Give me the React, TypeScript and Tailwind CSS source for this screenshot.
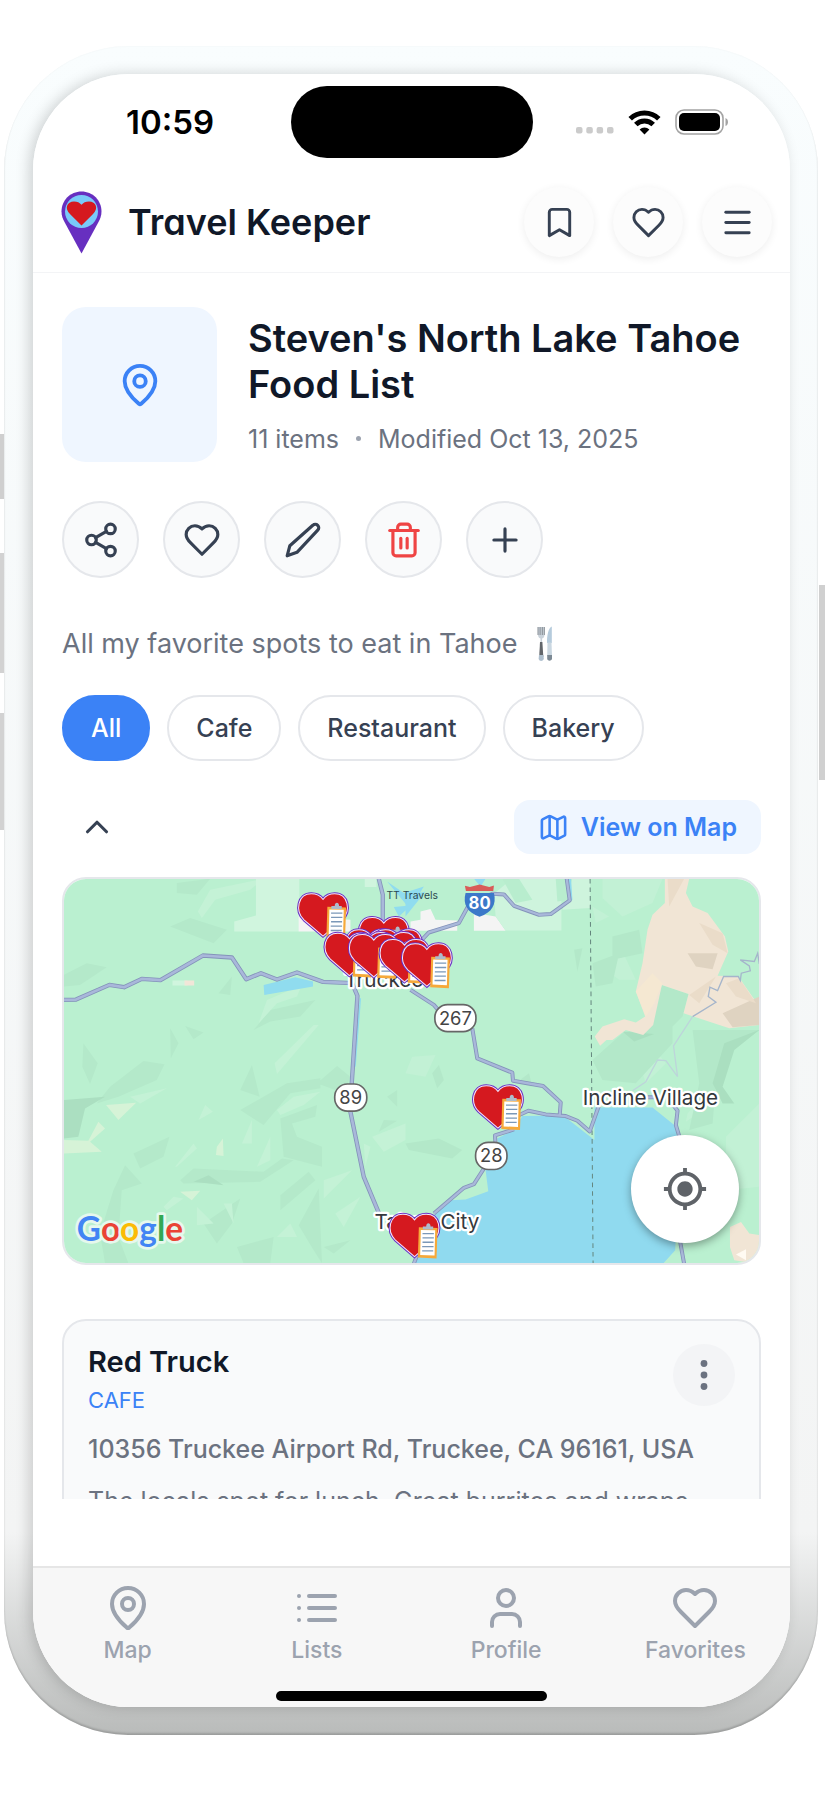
import { useState, type ReactNode } from "react";
import { ChevronUp, Map as MapIcon, MapPin, Plus, Share2, Trash2, Bookmark, Menu, User } from "lucide-react";
import { MdMyLocation } from "react-icons/md";

const CATEGORIES = ["All", "Cafe", "Restaurant", "Bakery"];

// Top-left corner of every saved place, back to front
const MARKERS: [number, number][] = [
  [741, 68],
  [923, 139],
  [883, 176],
  [963, 176],
  [948, 184],
  [820, 186],
  [893, 190],
  [985, 205],
  [1052, 218],
  [1265, 643],
  [1015, 1028],
];

function Stroke({ size, children }: { size: number; children: ReactNode }) {
  return (
    <svg
      width={size}
      height={size}
      viewBox="0 0 24 24"
      fill="none"
      stroke="currentColor"
      strokeWidth={2}
      strokeLinecap="round"
      strokeLinejoin="round"
      aria-hidden="true"
    >
      {children}
    </svg>
  );
}

function HeartIcon({ size }: { size: number }) {
  return (
    <Stroke size={size}>
      <path d="M19 14c1.49-1.46 3-3.21 3-5.5A5.5 5.5 0 0 0 16.5 3c-1.76 0-3 .5-4.5 2-1.5-1.5-2.74-2-4.5-2A5.5 5.5 0 0 0 2 8.5c0 2.3 1.5 4.05 3 5.5l7 7Z" />
    </Stroke>
  );
}

function PencilIcon({ size }: { size: number }) {
  return (
    <Stroke size={size}>
      <path d="M18.2 2.7a2 2 0 0 1 3.1 3.1L8.200 19.800 2 22l1.700-6.400Z" />
    </Stroke>
  );
}

function ListIcon({ size }: { size: number }) {
  return (
    <Stroke size={size}>
      <path d="M8 6h13M8 12h13M8 18h13M3 6h.01M3 12h.01M3 18h.01" />
    </Stroke>
  );
}

function StatusBar() {
  return (
    <div className="grid grid-cols-[1fr_auto_1fr] items-center pt-3">
      <div className="pl-[93px] text-[33px] leading-10 font-semibold text-black">10:59</div>
      <div className="h-[72px] w-[242px] rounded-full bg-black" />
      <div className="flex items-center justify-end gap-3.5 pr-[61px]">
        <svg width="38" height="26" viewBox="0 0 38 26" fill="#cbcbcb" aria-hidden="true">
          <rect x="0" y="18" width="6.500" height="6.500" rx="2" />
          <rect x="10.300" y="18" width="6.500" height="6.500" rx="2" />
          <rect x="20.600" y="18" width="6.500" height="6.500" rx="2" />
          <rect x="31" y="18" width="6.500" height="6.500" rx="2" />
        </svg>
        <svg width="33" height="25" viewBox="0 0 33 25" aria-hidden="true">
          <g fill="none" stroke="#000" strokeWidth="5">
            <path d="M2.2 8.8a20.5 20.5 0 0 1 28.6 0" />
            <path d="M7.8 14.5a12.4 12.4 0 0 1 17.4 0" />
          </g>
          <path d="M11.6 19.4a7.2 7.2 0 0 1 9.8 0L16.5 24.6Z" />
        </svg>
        <svg width="54" height="26" viewBox="0 0 54 26" aria-hidden="true">
          <rect x="1" y="1" width="47" height="24" rx="8" fill="none" stroke="#a3a3a3" strokeWidth="1.6" />
          <rect x="4" y="4" width="41" height="18" rx="5" />
          <path d="M50.5 9c3.300 1.200 3.300 7 0 8Z" fill="#a3a3a3" />
        </svg>
      </div>
    </div>
  );
}

function AppHeader() {
  const round =
    "flex size-[70px] items-center justify-center rounded-full bg-[#fcfcfc] text-gray-700 shadow-[0_2px_8px_rgba(0,0,0,0.07)]";

  return (
    <header className="flex items-center border-b border-gray-100 pt-[29px] pr-[18px] pb-[15px] pl-7">
      <svg width="41" height="63" viewBox="0 0 41 63" aria-hidden="true">
        <path d="M20.500 0.500C9.300 0.500 0.500 9.300 0.500 20.500c0 4.500 1.400 7.500 3 10.500L20.500 62.500 37.500 31c1.600-3 3-6 3-10.500C40.500 9.300 31.700 0.500 20.500 0.500Z" fill="#672fc0" />
        <circle cx="20.500" cy="20.500" r="16.500" fill="#79caf8" />
        <path d="M20.500 34.500 9.200 23.200C3 17.500 6 10.500 13 10.500c3.300 0 5.700 1.200 7.500 3.300 1.800-2.100 4.200-3.300 7.500-3.300 7 0 10 7 3.800 12.700Z" fill="#d5191f" />
      </svg>
      <h1 className="ml-[26px] flex-1 text-[36px] leading-10 font-semibold text-gray-900 [font-feature-settings:'cv11']">
        Travel Keeper
      </h1>
      <div className="flex gap-[19px]">
        <button className={round} aria-label="Saved">
          <Bookmark size={35} />
        </button>
        <button className={round} aria-label="Favorites">
          <HeartIcon size={35} />
        </button>
        <button className={round} aria-label="Menu">
          <Menu size={35} />
        </button>
      </div>
    </header>
  );
}

function ListSummary() {
  const round =
    "flex size-[77px] items-center justify-center rounded-full border-2 border-gray-200 bg-gray-50";

  return (
    <section>
      <div className="flex items-center gap-[31px]">
        <div className="flex size-[155px] shrink-0 items-center justify-center rounded-3xl bg-blue-50 text-[#3b82f6]">
          <MapPin size={46} />
        </div>
        <div>
          <h2 className="text-[38px] leading-[46px] font-semibold text-gray-900">
            Steven's North Lake Tahoe Food List
          </h2>
          <p className="mt-4 flex items-center text-[25px] leading-8 text-[#6b7280]">
            11 items
            <span className="mx-[17px] size-[5px] rounded-full bg-[#9ca3af]" />
            Modified Oct 13, 2025
          </p>
        </div>
      </div>

      <div className="mt-[39px] flex gap-6 text-gray-700">
        <button className={round} aria-label="Share list">
          <Share2 size={38} />
        </button>
        <button className={round} aria-label="Favorite list">
          <HeartIcon size={38} />
        </button>
        <button className={round} aria-label="Edit list">
          <PencilIcon size={38} />
        </button>
        <button className={`${round} text-[#ef4444]`} aria-label="Delete list">
          <Trash2 size={38} />
        </button>
        <button className={round} aria-label="Add item">
          <Plus size={38} />
        </button>
      </div>

      <p className="mt-[46px] flex items-center gap-5 text-[27px] leading-10 text-[#6b7280]">
        All my favorite spots to eat in Tahoe
        <svg width="16" height="36" viewBox="0 0 16 36" role="img" aria-label="fork and knife">
          <path d="M1 1v7c0 3 1 4 2.500 4.500V17h1.600v-4.500C6.700 12 7.500 11 7.500 8V1" fill="#c9d2da" />
          <path d="M1 1v8M3.100 1v8M5.300 1v8M7.300 1v8" stroke="#868c93" strokeWidth="1" />
          <path d="M3 16h2.400l.9 15H2.200Z" fill="#62666b" />
          <path d="M2 29h4.500l.3 4c-1 2.500-4.300 2.500-5.200 0Z" fill="#aebfce" />
          <path d="M14.800.500C11.500 2 9.800 9 10 17h4.800Z" fill="#b5cbdc" />
          <path d="M10.500 16.500h4L15 30h-4.800Z" fill="#cad7e1" />
          <path d="M10.200 29H15v4c-1 2.300-4 2.300-4.800 0Z" fill="#7c8994" />
        </svg>
      </p>
    </section>
  );
}

function Shield({ x, y, w, label }: { x: number; y: number; w: number; label: string }) {
  return (
    <g>
      <rect x={x} y={y} width={w} height="81" rx="38" fill="#fff" stroke="#666" strokeWidth="5" />
      <text x={x + w / 2} y={y + 60} textAnchor="middle" fontSize="55" fill="#444">
        {label}
      </text>
    </g>
  );
}

function HeartMarker({ x, y }: { x: number; y: number }) {
  const heart =
    "M77 131 20 82C-8 54 2 4 42 4c15 0 27 6 35 17C85 10 97 4 112 4c40 0 50 50 22 78Z";
  return (
    <g transform={`translate(${x} ${y})`}>
      <path d={heart} fill="#d5191f" stroke="#6a2fc4" strokeWidth="9" />
      <path d={heart} fill="#d5191f" stroke="#f3e9fb" strokeWidth="3" />
      <path d="m90 43 56 2-3 92-56-3Z" fill="#f6a93a" />
      <path d="m96 51 43 1-2 76-43-2Z" fill="#fff" />
      <path d="M102 50v-9h10c0-13 13-13 13 0h8v9Z" fill="#aebccb" />
      <path d="M101 62h34M101 75h34M101 88h33M100 101h34M100 114h33" stroke="#7b98b8" strokeWidth="4" />
    </g>
  );
}

const WEST_ROADS =
  "M42 390 78 389 178 345 222 352 275 327 331 331 458 257 545 263 588 328 632 310 680 329 740 308 818 336 905 340 921 378 904 640 900 725 940 920 990 1040M985 27 997 75 997 200";
const EAST_ROADS =
  "M40 220 70 188 160 160 190 105 260 72 295 74 325 108 400 135 435 133 492 92 483 27M15 360 85 405 115 440M200 475 215 565 320 608 322 632 412 648 465 697 462 735M270 825 268 796 325 778M330 740 368 722 420 733 480 738 515 752 552 784 580 705M235 895 205 942 175 953 85 1030M25 1180 48 1120M725 682 745 682M795 695 815 722 810 765 822 805M822 1110 835 1182";

function MapDrawing() {
  return (
    <svg
      viewBox="42 27 2082 1152"
      preserveAspectRatio="xMidYMid slice"
      className="block size-full [font-family:Inter,sans-serif]"
      role="img"
      aria-label="Map of saved places around North Lake Tahoe"
    >
      <rect x="0" y="0" width="2200" height="1200" fill="#baf0d0" />

      {/* terrain relief, western side */}
      <g fill="#b4e9ca">
        <path d="M380 40 480 27 440 75 380 70ZM360 170 420 145 530 180 490 220ZM42 315 110 280 170 292 90 345 42 350ZM100 520 143 580 120 642 97 590ZM360 475 385 520 362 565ZM405 468 460 488 430 508ZM180 650 280 573 343 583 320 630 205 680 140 700ZM605 585 628 680 570 660ZM570 720 710 640 810 625 810 655 720 670 640 765ZM800 640 860 588 900 620 880 670ZM610 480 660 420 795 390 750 440 660 455ZM505 370 545 320 540 375ZM690 745 800 705 795 740 725 760 740 800 815 830 815 890 700 860ZM250 850 358 800 340 860 270 895ZM390 930 430 895 640 905 695 865 730 870 630 935 400 940ZM190 960 225 885 275 940 215 960 205 1100 235 1179 165 1179 150 1090ZM690 975 775 905 795 930 690 1020ZM460 1060 570 985 545 1060 500 1120ZM560 1130 670 1100 660 1179 580 1179ZM745 1065 805 955 815 1179 790 1140ZM820 1130 900 1110 850 1150ZM985 785 1000 750 1040 752ZM1010 680 1040 660 1040 710Z" />
        <path d="M42 690 165 680 105 715 85 800 42 805Z" fill="#abdfc1" />
        <path d="M430 935 475 915 520 945Z" fill="#abdfc1" />
      </g>
      <g fill="#c4f2d6">
        <path d="M443 125 480 60 640 27 600 60 495 90 455 145ZM625 460 650 390 720 360 760 330 740 380 680 400ZM673 580 790 465 805 465 680 612ZM240 680 350 655 270 700ZM680 720 730 680 810 665 760 705 690 735ZM375 890 430 820 440 835 380 890ZM575 820 605 750 605 820ZM620 890 660 800 660 870ZM445 750 465 705 488 725ZM340 1010 370 980 400 985 350 1020ZM820 930 905 900 820 985ZM855 1030 930 980 880 1070ZM680 1100 720 1060 740 1100ZM440 1010 490 1060 440 1065ZM520 1000 545 1000 550 1060ZM965 800 1065 760 1065 810 1000 845ZM940 820 960 830 945 890Z" />
        <path d="M168 705 258 698 205 750ZM42 810 115 812 145 755 165 775 120 815 155 845 42 850ZM390 965 450 962 425 990ZM500 830 518 805 520 858 497 855Z" fill="#d6f3d7" />
        <path d="M617 27h130v158H552v-30l65-18ZM367 332h45v15h-45ZM943 27h35v25h-35Z" fill="#d0f5de" />
      </g>
      <path d="M745 135 800 145 900 150 900 185H745Z" fill="#f4f4f4" />
      <path d="M403 332h29v15h-29Z" fill="#f1e6d8" />
      <path d="M640 345 735 322 788 335 788 350 642 375ZM1010 35 1060 70 1120 50 1090 100 1045 140 1030 112 1070 108ZM928 385 932 385 916 590 909 590Z" fill="#90dcef" />

      <g transform="translate(1065 0)">
        <path d="M15 155 45 150 45 125 75 118 90 150 155 152 155 183 15 183ZM205 130 270 140 300 183 205 183Z" fill="#f4f4f4" />
        <path d="M265 72 320 27 400 27 467 27 467 182H300L270 140ZM500 27 553 27 553 115 470 120Z" fill="#cef4dd" />
        <path d="M450 27 480 27 490 90 455 95ZM290 27 340 27 380 90 330 100Z" fill="#b8edce" />
        <path d="M590 27 770 27 740 100 650 140 590 85ZM600 300 650 245 690 330 640 330ZM20 560 90 555 60 620 0 610ZM560 110 610 140 570 160ZM730 520 780 580 720 640 700 580ZM845 730 900 670 890 720 840 755ZM960 800 1060 700 1060 950 960 960Z" fill="#c2f1d5" />
        <path d="M620 200 700 180 710 250 620 270ZM560 280 640 250 620 340 570 350ZM650 490 800 440 800 520 690 640 590 630 560 570ZM505 240 530 235 515 305ZM80 610 100 585 115 630 95 655ZM330 640 370 610 380 650ZM0 820 100 805 170 840 140 865 10 840ZM860 480 1060 480 980 540 930 640 920 760 850 780 880 640ZM768 345 848 372 830 440 770 500 735 470Z" fill="#b3e8c9" />
        <path d="M1060 480 985 540 950 650 985 700 950 700 920 640 955 520ZM650 485 745 492 685 515Z" fill="#aadfc0" />
        <path d="M777 27 850 27 840 70 860 110 905 130 957 200 967 245 935 318 997 320 1060 410 1060 465 970 475 833 430 848 372 768 345 742 465 712 495 660 480 620 510 602 510 583 527 567 500 590 470 655 448 690 458 718 440 690 365 710 280 725 180 740 135 777 100Z" fill="#f1e5d5" />
        <path d="M845 250 935 250 920 298 870 290ZM950 430 1060 380 1060 465 980 472Z" fill="#dfd3c1" />
        <path d="M785 27 835 27 790 110ZM880 160 950 190 965 250 920 225ZM850 375 930 320 880 400ZM960 340 1000 325 1050 400 990 380Z" fill="#eadcc9" />
        <path d="M690 365 740 310 770 340 745 400 720 440Z" fill="#f5e8d2" />
        <path d="M972 1070 1005 1055 1030 1090 1062 1095 1062 1182 985 1170 972 1130Z" fill="#f1e5d5" />
        <path d="M990 1153 1020 1137 1020 1170Z" fill="#fffaf2" />

        {/* Lake Tahoe */}
        <path d="M280 830 275 805 325 780 350 738 420 737 480 742 566 810 566 712 740 712 805 765 822 830 808 1140 770 1182 30 1182 40 1110 85 1035 135 990 180 988 248 963 240 900Z" fill="#90daef" />
        <path d="M205 27 240 27 225 50ZM488 27 496 27 500 90 492 95Z" fill="#90daef" />
        <path d="M0 80 60 65 0 140Z" fill="#90dcef" />

        <path d="M860 440 930 397 907 380 912 352 935 362 953 320 997 320 1003 332 1006 310 1033 303 1030 288 1003 270 1045 275 1055 250 1060 282" fill="none" stroke="#a5b5cb" strokeWidth="4" />
        <path d="M860 440 803 528 815 620 780 572 755 570 720 635 680 662" fill="none" stroke="#bdd5da" strokeWidth="4" />
        <path d="M553 27 562 1182" fill="none" stroke="#64857d" strokeWidth="3" strokeDasharray="14 12" />
      </g>

      <g fill="none" strokeLinejoin="round">
        <path d={WEST_ROADS} stroke="#8493ba" strokeWidth="13" />
        <path d={WEST_ROADS} stroke="#a9b8da" strokeWidth="8" />
        <g transform="translate(1065 0)">
          <path d={EAST_ROADS} stroke="#8493ba" strokeWidth="12" />
          <path d={EAST_ROADS} stroke="#a9b8da" strokeWidth="7" />
        </g>
      </g>

      <Shield x={853} y={642} w={96} label="89" />
      <Shield x={1153} y={404} w={123} label="267" />
      <Shield x={1275} y={817} w={94} label="28" />
      <path d="M1245 70C1236 105 1250 128 1287 141 1324 128 1338 105 1330 70Z" fill="#3b78c9" />
      <path d="M1246 64 1243 48 1258 52 1287 44 1316 52 1330 47 1328 64Z" fill="#d95b58" />
      <text x="1287" y="117" textAnchor="middle" fontSize="50" fontWeight="700" fill="#fff">
        80
      </text>

      <g fill="#34383c" stroke="#fff" strokeWidth="14" strokeLinejoin="round" paintOrder="stroke" fontSize="62">
        <text x="882" y="350">Truckee</text>
        <text x="1596" y="706">Incline Village</text>
        <text x="972" y="1077">Tahoe City</text>
      </g>
      <text x="1008" y="87" fontSize="31" fill="#2c4a52">TT Travels</text>

      {MARKERS.map(([x, y]) => (
        <HeartMarker key={`${x}-${y}`} x={x} y={y} />
      ))}

      <text
        x="80"
        y="1112"
        fontSize="100"
        fontWeight="700"
        stroke="#e6f8ed"
        strokeWidth="16"
        strokeLinejoin="round"
        paintOrder="stroke"
        className="[font-family:Lato,sans-serif]"
      >
        <tspan fill="#4285f4">G</tspan>
        <tspan fill="#ea4335">o</tspan>
        <tspan fill="#fbbc05">o</tspan>
        <tspan fill="#4285f4">g</tspan>
        <tspan fill="#34a853">l</tspan>
        <tspan fill="#ea4335">e</tspan>
      </text>
    </svg>
  );
}

function PlaceCard() {
  return (
    <article className="rounded-3xl border-2 border-gray-200 bg-gray-50 px-6 pt-[23px] pb-6 text-[25px] leading-8 text-[#6b7280]">
      <div className="flex justify-between">
        <div>
          <h3 className="text-[29px] leading-9 font-semibold text-gray-900">Red Truck</h3>
          <p className="mt-1.5 text-[22px] leading-7 text-[#3b82f6]">CAFE</p>
        </div>
        <button
          className="flex size-[62px] items-center justify-center rounded-full bg-gray-100"
          aria-label="More options"
        >
          <svg width="8" height="32" viewBox="0 0 8 32" fill="currentColor" aria-hidden="true">
            <circle cx="4" cy="4.500" r="3.400" />
            <circle cx="4" cy="16" r="3.400" />
            <circle cx="4" cy="27.500" r="3.400" />
          </svg>
        </button>
      </div>
      <p className="mt-[19px] font-medium">10356 Truckee Airport Rd, Truckee, CA 96161, USA</p>
      <p className="mt-5">The locals spot for lunch. Great burritos and wraps.</p>
    </article>
  );
}

function TabBar() {
  const tabs = [
    { label: "Map", icon: <MapPin size={48} /> },
    { label: "Lists", icon: <ListIcon size={48} /> },
    { label: "Profile", icon: <User size={48} /> },
    { label: "Favorites", icon: <HeartIcon size={48} /> },
  ];

  return (
    <footer className="border-t-2 border-[#e6e6e6] bg-[#f7f7f7] pt-4 pb-1.5">
      <nav className="grid grid-cols-4">
        {tabs.map((tab) => (
          <a
            key={tab.label}
            href="#"
            className="flex flex-col items-center gap-1 text-[23px] leading-7 font-medium text-[#9ca3af]"
          >
            {tab.icon}
            {tab.label}
          </a>
        ))}
      </nav>
      <div className="mx-auto mt-[27px] h-2.5 w-[271px] rounded-full bg-black" />
    </footer>
  );
}

export default function App() {
  const [category, setCategory] = useState("All");
  const [mapOpen, setMapOpen] = useState(true);

  return (
    <div className="flex min-h-screen items-start bg-white pt-[46px] pb-[58px] [font-family:Inter,sans-serif]">
      {/* volume and action buttons */}
      <div className="w-1 pt-[388px]">
        <div className="h-[65px] bg-[#cfcfcf]" />
        <div className="mt-[54px] h-[120px] bg-[#d2d2d2]" />
        <div className="mt-10 h-[117px] bg-[#d2d2d2]" />
      </div>

      <div className="min-w-0 flex-1 rounded-[124px] bg-linear-to-b from-[#f9fdfe] via-[#f3f4f4] via-88% to-[#b9bbba] pt-7 pr-7 pb-7 pl-[29px] shadow-[inset_0_0_2px_rgba(0,0,0,0.05),inset_0_-2px_2px_rgba(0,0,0,0.15)]">
        <div className="rounded-[96px] shadow-[-4px_0_14px_0_rgba(0,0,0,0.17)]">
          <div className="overflow-hidden rounded-[96px] bg-white">
            <StatusBar />
            <AppHeader />

            <main className="px-[29px] pt-[34px] pb-[67px]">
              <ListSummary />

              <div className="mt-[31px] flex gap-[17px]">
                {CATEGORIES.map((name) => (
                  <button
                    key={name}
                    onClick={() => setCategory(name)}
                    className={`h-[66px] rounded-full border-2 px-[27px] text-[25px] leading-8 font-medium ${
                      category === name
                        ? "border-[#3b82f6] bg-[#3b82f6] text-white"
                        : "border-gray-200 bg-white text-gray-700"
                    }`}
                  >
                    {name}
                  </button>
                ))}
              </div>

              <div className="mt-[39px] flex justify-between">
                <button
                  onClick={() => setMapOpen(!mapOpen)}
                  className="flex h-[54px] w-[70px] items-center justify-center text-gray-700"
                  aria-label="Toggle map"
                >
                  <ChevronUp size={38} className={mapOpen ? "" : "rotate-180"} />
                </button>
                <a
                  href="#"
                  className="flex h-[54px] items-center gap-3 rounded-2xl bg-blue-50 px-6 text-[25px] leading-8 font-semibold text-[#3b82f6]"
                >
                  <MapIcon size={31} />
                  View on Map
                </a>
              </div>

              {mapOpen && (
                <div className="relative mt-[23px] h-[388px] overflow-hidden rounded-3xl border-2 border-gray-200">
                  <MapDrawing />
                  <button
                    className="absolute right-5 bottom-5 flex size-[108px] items-center justify-center rounded-full bg-white text-[#5f6368] shadow-[0_3px_8px_rgba(0,0,0,0.35)]"
                    aria-label="My location"
                  >
                    <MdMyLocation size={46} />
                  </button>
                </div>
              )}

              <div className="mt-[54px] h-[180px] overflow-hidden">
                <PlaceCard />
              </div>
            </main>

            <TabBar />
          </div>
        </div>
      </div>

      {/* power button */}
      <div className="w-[7px] pt-[539px] pl-px">
        <div className="h-[195px] bg-[#d0d0d0]" />
      </div>
    </div>
  );
}
